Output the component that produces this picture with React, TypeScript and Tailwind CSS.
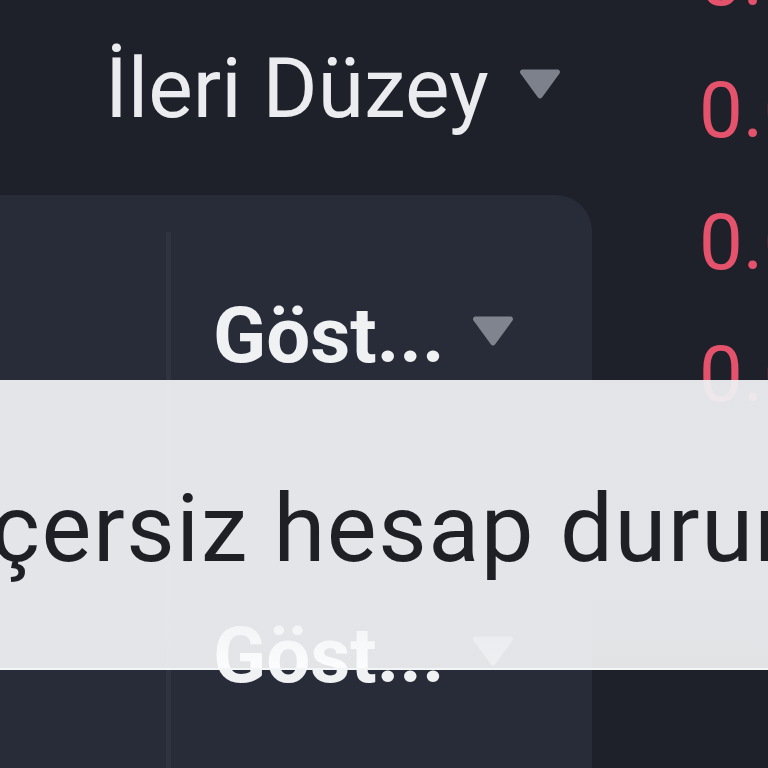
import React from 'react';

const Caret = ({ className }: { className?: string }) => (
  <svg viewBox="0 0 42 32" className={className} fill="currentColor">
    <path d="M3.5 1.5 H38.5 A2.5 2.5 0 0 1 40.5 5.5 L23 29.5 A2.5 2.5 0 0 1 19 29.5 L1.5 5.5 A2.5 2.5 0 0 1 3.5 1.5 Z" />
  </svg>
);

const prices = ['0.0021', '0.0019', '0.0018', '0.0017'];

function SelectRow({ label }: { label: string }) {
  return (
    <div className="flex items-start gap-[27px]">
      <span className="text-[78px] leading-none font-bold text-[#f0f1f3]">{label}</span>
      <Caret className="w-[42px] h-[32px] mt-[18px] text-[#80848e]" />
    </div>
  );
}

export default function App() {
  return (
    <div className="relative w-[768px] h-[768px] overflow-hidden bg-[#1e2129] flex font-['Roboto',sans-serif]">
      <div className="w-[592px] shrink-0 flex flex-col">
        <div className="h-[195px] flex items-start pt-[47px] pl-[105px] gap-[30px]">
          <span className="text-[84px] leading-none text-[#eaecef]">İleri Düzey</span>
          <Caret className="w-[42px] h-[32px] mt-[21px] text-[#7d818b]" />
        </div>
        <div className="flex-1 flex bg-[#282c38] rounded-tr-[36px]">
          <div className="w-[166px]" />
          <div className="w-[5px] mt-[37px] bg-[#2f3440]" />
          <div className="flex flex-col gap-[242px] pt-[102px] pl-[42px]">
            <SelectRow label="Göst..." />
            <SelectRow label="Göst..." />
          </div>
        </div>
      </div>

      <div className="flex-1 overflow-hidden pl-[107px] mt-[-87px] whitespace-nowrap">
        {prices.map((p, i) => (
          <div key={i} className="text-[78px] leading-[132px] text-[#e5526c]">
            {p}
          </div>
        ))}
      </div>

      <div className="absolute left-0 right-0 top-[380px] h-[290px] flex items-start pt-[102px] bg-linear-to-b from-[rgba(238,239,242,0.95)] from-75% to-[rgba(253,254,255,0.88)] border-b-[2px] border-[#f4f5f7]">
        <span className="ml-[-126px] text-[94px] leading-none tracking-[1.5px] text-[#1e2026] whitespace-nowrap">
          Geçersiz hesap durumu
        </span>
      </div>
    </div>
  );
}
